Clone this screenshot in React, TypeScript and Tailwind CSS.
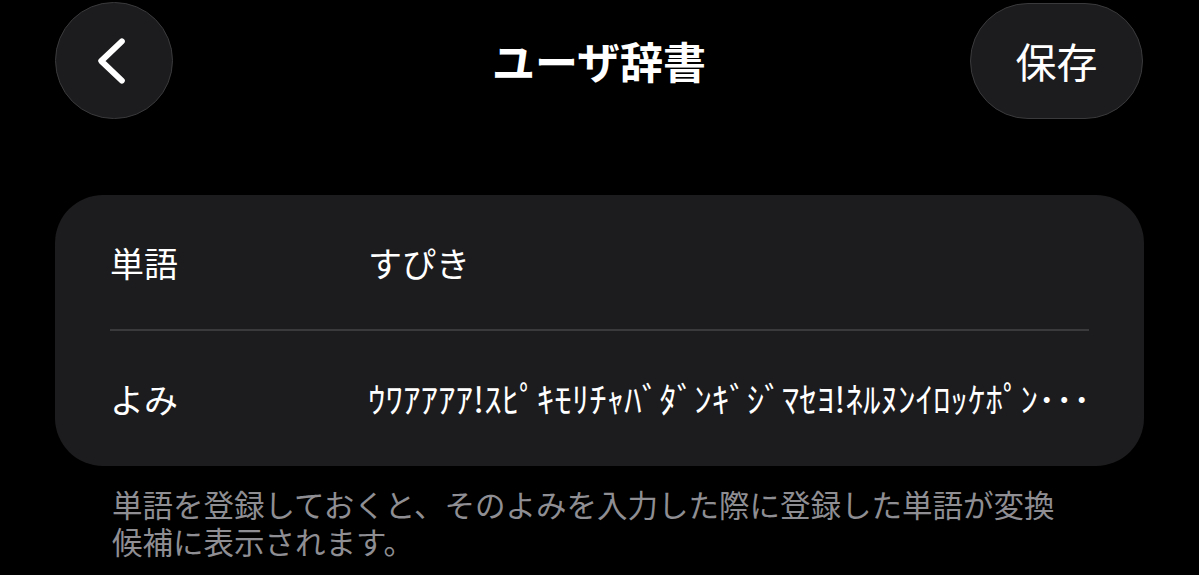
import React from "react";

const font = { fontFamily: '"Noto Sans CJK JP", "Noto Sans", sans-serif' };

export default function App() {
  return (
    <div
      className="min-h-[575px] w-full bg-black text-white"
      style={font}
    >
      {/* Header */}
      <div className="grid grid-cols-[1fr_auto_1fr] items-center pt-[2px] pl-[55px] pr-[56px]">
        <button className="flex h-[117px] w-[118px] items-center justify-center rounded-full border border-[#3a3a3c] bg-[#1c1c1e]">
          <svg width="118" height="117" viewBox="0 0 118 117" fill="none">
            <path
              d="M67 39 L46 59 L67 79"
              stroke="white"
              strokeWidth="6"
              strokeLinecap="round"
              strokeLinejoin="round"
            />
          </svg>
        </button>
        <h1 className="text-[43px] font-bold leading-none">ユーザ辞書</h1>
        <div className="flex justify-end">
          <button className="flex h-[116px] w-[173px] items-center justify-center rounded-full border border-[#3a3a3c] bg-[#1c1c1e] text-[41px] leading-none">
            保存
          </button>
        </div>
      </div>

      {/* Card */}
      <div className="mx-[55px] mt-[76px] flex flex-col rounded-[48px] bg-[#1c1c1e] px-[55px]">
        <div className="flex h-[134px] items-center text-[34px]">
          <span className="w-[258px]">単語</span>
          <span>すぴき</span>
        </div>
        <div className="h-[2px] bg-[#3a3a3c]" />
        <div className="flex h-[135px] items-center text-[34px]">
          <span className="w-[258px] shrink-0">よみ</span>
          <span className="whitespace-nowrap text-[35px]">
            ｳﾜｱｱｱｱ!ｽﾋﾟｷﾓﾘﾁｬﾊﾞﾀﾞﾝｷﾞｼﾞﾏｾﾖ!ﾈﾙﾇﾝｲﾛｯｹﾎﾟﾝ･･･
          </span>
        </div>
      </div>

      {/* Footer note */}
      <div className="mt-[20px] pl-[112px] text-[30.5px] leading-[37px] text-[#8e8e93]">
        <p>単語を登録しておくと、そのよみを入力した際に登録した単語が変換</p>
        <p>候補に表示されます。</p>
      </div>
    </div>
  );
}
